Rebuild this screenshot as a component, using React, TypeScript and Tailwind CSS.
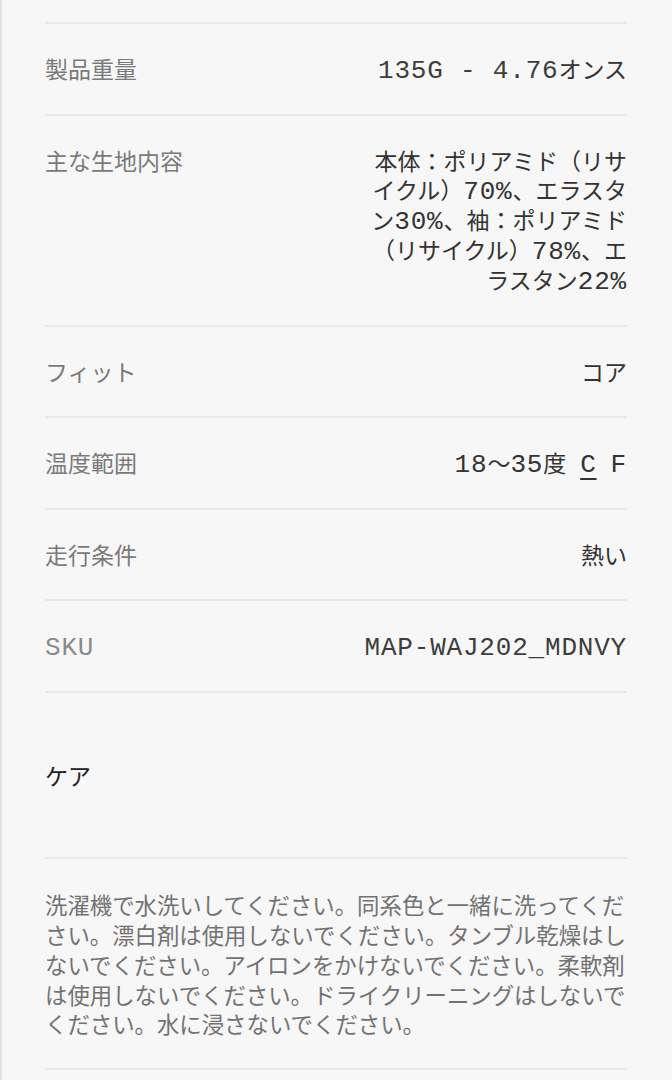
const JP = '"Noto Sans CJK JP", "Noto Sans", sans-serif';
const MONO = '"Liberation Mono", "Noto Sans CJK JP", monospace';

function M({ children }: { children: React.ReactNode }) {
  return (
    <span className="text-[26px] leading-none tracking-[0.8px]" style={{ fontFamily: MONO }}>
      {children}
    </span>
  );
}

type Spec = { label: React.ReactNode; value: React.ReactNode; tall?: boolean };

const SPECS: Spec[] = [
  {
    label: '製品重量',
    value: (
      <span className="text-[#3d3d3d]">
        <M>135G - 4.76</M>
        <span className="text-[#333333]">オンス</span>
      </span>
    ),
  },
  {
    label: '主な生地内容',
    tall: true,
    value: (
      <>
        本体：ポリアミド（リサ
        <br />
        イクル）<M>70%</M>、エラスタ
        <br />
        ン<M>30%</M>、袖：ポリアミド
        <br />
        （リサイクル）<M>78%</M>、エ
        <br />
        ラスタン<M>22%</M>
      </>
    ),
  },
  { label: 'フィット', value: 'コア' },
  {
    label: '温度範囲',
    value: (
      <>
        <M>18</M>〜<M>35</M>度
        <span className="ml-[14px] underline decoration-2 underline-offset-[6px]">
          <M>C</M>
        </span>
        <span className="ml-[14px]">
          <M>F</M>
        </span>
      </>
    ),
  },
  { label: '走行条件', value: '熱い' },
  {
    label: <span className="text-[#8a8a8a]"><M>SKU</M></span>,
    value: <span className="text-[#3d3d3d]"><M>MAP-WAJ202_MDNVY</M></span>,
  },
];

export default function App() {
  return (
    <div
      className="min-h-[1080px] bg-[#f7f7f7] border-l-2 border-[#e2e2e2] pl-[43px] pr-[45px] pt-[22px]"
      style={{ fontFamily: JP }}
    >
      {/* Spec rows */}
      {SPECS.map((s, i) => (
        <div
          key={i}
          className={`flex justify-between items-start gap-6 border-t-2 border-[#e9e9e9] py-[30px] text-[23px] ${
            s.tall ? 'leading-[28.6px]' : 'leading-[29.4px]'
          }`}
        >
          <div className="text-[#7a7a7a] whitespace-nowrap">{s.label}</div>
          <div className="text-right text-[#333333] whitespace-nowrap">{s.value}</div>
        </div>
      ))}

      {/* Care header */}
      <div className="border-t-2 border-[#e9e9e9] py-[67px] leading-[30px] text-[23px] text-[#222222]">
        ケア
      </div>

      {/* Care text */}
      <div className="border-t-2 border-b-2 border-[#e9e9e9] pt-[31px] pb-[29px] leading-[29.75px] text-[22.4px] text-[#727272] whitespace-nowrap">
        洗濯機で水洗いしてください。同系色と一緒に洗ってくだ
        <br />
        さい。漂白剤は使用しないでください。タンブル乾燥はし
        <br />
        ないでください。アイロンをかけないでください。柔軟剤
        <br />
        は使用しないでください。ドライクリーニングはしないで
        <br />
        ください。水に浸さないでください。
      </div>
    </div>
  );
}
